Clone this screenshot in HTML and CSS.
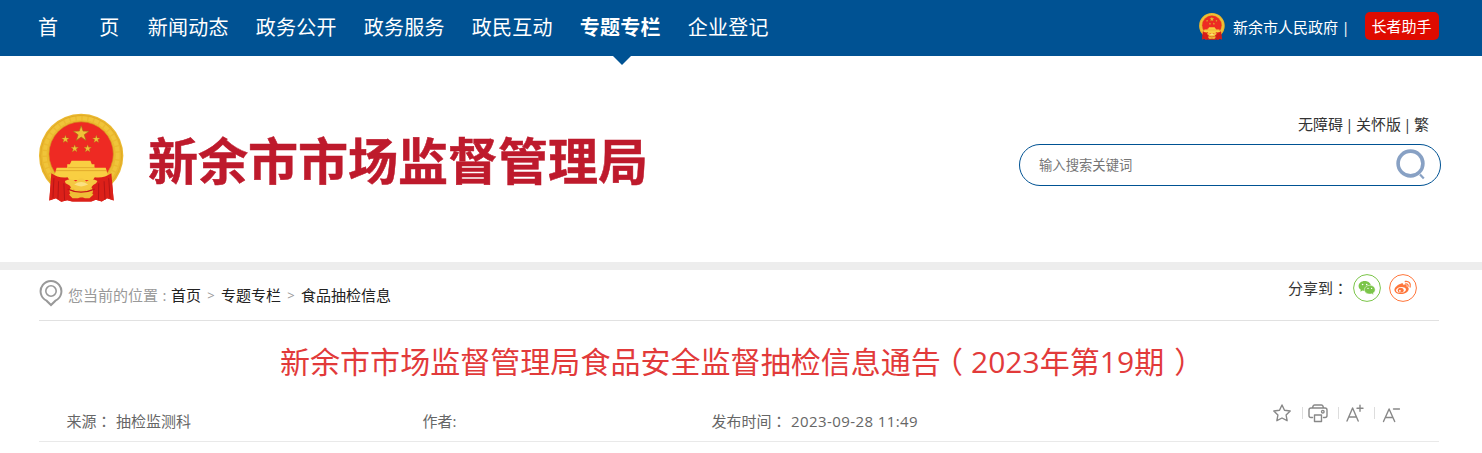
FILE: index.html
```html
<!DOCTYPE html>
<html lang="zh-CN">
<head>
<meta charset="utf-8">
<title>新余市市场监督管理局</title>
<link rel="stylesheet" href="styles.css">
</head>
<body>
<svg class="defs" width="0" height="0">
  <symbol id="star" viewBox="-10 -10 20 20"><path d="M0-10 2.3-3.2 9.5-3.1 3.7 1.2 5.9 8.1 0 4-5.9 8.1-3.7 1.2-9.5-3.1-2.3-3.2z"/></symbol>
  <symbol id="emblem" viewBox="27 26 256 268">
    <path d="M65 205 58 288 78 281 94 292 112 287 128 292H184L198 286 216 291 232 281 252 288 244 205z" fill="#dc2019"/>
    <ellipse cx="154" cy="153" rx="127" ry="126" fill="#ebb92f"/>
    <ellipse cx="154" cy="153" rx="122" ry="121" fill="none" stroke="#dba324" stroke-width="2"/>
    <ellipse cx="154" cy="150" rx="110" ry="110" fill="none" stroke="#f0c43a" stroke-width="12" stroke-dasharray="14 4"/>
    <ellipse cx="154" cy="148" rx="97" ry="97" fill="#ee2a23" stroke="#d59720" stroke-width="2"/>
    <g fill="#f1c238" stroke="#a86f18" stroke-width=".8">
      <use href="#star" x="129" y="62" width="50" height="50"/>
      <use href="#star" x="94" y="91" width="25" height="25"/>
      <use href="#star" x="187" y="91" width="25" height="25"/>
      <use href="#star" x="122" y="119" width="25" height="25"/>
      <use href="#star" x="161" y="119" width="25" height="25"/>
    </g>
    <path d="M125 168H182L186 179H194V189H228L236 218 203 226H105L72 218 80 189H112V179H120z" fill="#f9cf42"/>
    <path d="M115 189H193M78 198H230" stroke="#d79a22" stroke-width="2"/>
    <path d="M64 206Q86 222 113 218L128 240 118 256 126 290 112 287 94 292 78 281 58 288zM245 206Q222 222 195 218L180 240 190 256 184 290 198 286 216 291 232 281 252 288z" fill="#dc2019"/>
    <path d="M72 221 69 280M86 230 84 284M102 236 104 287M237 221 241 280M223 230 226 286M207 236 206 286" stroke="#b51516" stroke-width="3" fill="none"/>
    <path d="M105 229Q124 218 138 231Q154 211 170 231Q185 218 203 229L199 236Q187 241 182 251Q154 263 126 251Q120 240 107 236z" fill="#f5c841"/>
    <path d="M133 240Q154 225 175 240Q154 251 133 240z" fill="#fae183"/>
    <path d="M117 270 132 264Q154 251 176 264L191 270 179 281H165L155 276 145 281H128z" fill="#efbd36"/>
    <path d="M113 254Q153 272 195 254" fill="none" stroke="#c81518" stroke-width="4"/>
  </symbol>
</svg>
<header class="topbar">
  <nav class="nav">
    <a>首　　页</a><a>新闻动态</a><a>政务公开</a><a>政务服务</a><a>政民互动</a><a class="active">专题专栏</a><a>企业登记</a>
  </nav>
  <div class="gov">
    <svg class="gov-emblem"><use href="#emblem"/></svg>
    <span>新余市人民政府</span><i>|</i>
    <a class="elder">长者助手</a>
  </div>
</header>
<section class="banner">
  <svg class="logo"><use href="#emblem"/></svg>
  <h1>新余市市场监督管理局</h1>
  <div class="tools">
    <div class="links"><span>无障碍</span><i>|</i><span>关怀版</span><i>|</i><span>繁</span></div>
    <div class="search">
      <span>输入搜索关键词</span>
      <svg width="32" height="34" viewBox="0 0 32 34" fill="none" stroke="#88a1c4"><circle cx="15.500" cy="15.500" r="12.400" stroke-width="3.600"/><path d="m25 26.500 3.800 4" stroke-width="2.200"/></svg>
    </div>
  </div>
</section>
<main class="page">
  <div class="crumbs">
    <svg class="pin" width="24" height="28" viewBox="0 0 24 28" fill="none" stroke="#999"><path d="M7.500 21.700A10.400 10.400 0 1 1 16.500 21.700L12 26z" stroke-width="2"/><circle cx="12" cy="12" r="5.200" stroke-width="1.600"/></svg>
    <div class="trail">您当前的位置<b class="colon">:</b><a>首页</a><b class="sep">&gt;</b><a>专题专栏</a><b class="sep">&gt;</b><a>食品抽检信息</a></div>
    <div class="share">
      <span>分享到<span class="tc" lang="zh-TW">：</span></span>
      <svg width="28" height="28" viewBox="0 0 28 28"><circle cx="14" cy="14" r="13.400" fill="#fff" stroke="#7bc549"/><path d="M11.700 7C8.200 7 5.600 9.200 5.600 12c0 1.600.8 2.900 2.200 3.800L7.300 17.800l2.300-1.200q1 .3 2.100.3c3.600 0 6.200-2.200 6.200-4.900S15.300 7 11.700 7z" fill="#7bc549"/><path d="M16.800 11.300c-3.100 0-5.400 1.900-5.400 4.400s2.300 4.400 5.400 4.400q1 0 1.800-.3l2.100 1.100-.5-1.800c1.200-.8 2-2 2-3.400 0-2.500-2.300-4.400-5.400-4.400z" fill="#7bc549" stroke="#fff" stroke-width=".5"/><g fill="#fff"><circle cx="9.600" cy="10.500" r=".8"/><circle cx="13.700" cy="10.500" r=".8"/><circle cx="15" cy="14.400" r=".65"/><circle cx="18.600" cy="14.400" r=".65"/></g></svg>
      <svg width="28" height="28" viewBox="0 0 28 28"><circle cx="14" cy="14" r="13.400" fill="#fff" stroke="#ff763b"/><path d="M12.300 9.500c1-.5 2.200-.2 2.100 1.400 2-.8 3.900-.5 3.200 1.600 1.500.4 2.300 1.400 2.100 2.800-.4 2.700-4 4.800-7.700 4.800-3.800 0-6.600-1.700-6.600-4.300 0-2.300 3.500-5.200 6.900-6.300z" fill="#ff763b"/><ellipse cx="12" cy="16" rx="5" ry="3" transform="rotate(-8 12 16)" fill="#fff"/><ellipse cx="11.700" cy="16.200" rx="3" ry="2.500" fill="#ff763b"/><circle cx="10.900" cy="16.800" r=".9" fill="#fff"/><path d="M16.300 7.500c3.500-.7 6 2 4.800 5.500M16.700 9.900c1.800-.3 2.800.9 2.300 2.500" fill="none" stroke="#ff763b" stroke-width="1.300" stroke-linecap="round"/></svg>
    </div>
  </div>
  <h2>新余市市场监督管理局食品安全监督抽检信息通告<span class="open">（</span><span>2023</span>年第<span>19</span>期<span class="close">）</span></h2>
  <div class="meta">
    <div>来源<span class="tc" lang="zh-TW">：</span> 抽检监测科</div>
    <div>作者:</div>
    <div>发布时间<span class="tc" lang="zh-TW">：</span> <span class="date">2023-09-28 11:49</span></div>
    <div class="actions">
      <svg width="20" height="20" viewBox="0 0 20 20"><path d="m10 2 2.500 5.200 5.700.8-4.100 4 1 5.700-5.100-2.700-5.100 2.700 1-5.700-4.100-4 5.700-.8z"/></svg><i></i>
      <svg width="20" height="20" viewBox="0 0 20 20"><path d="M4.500 14.500H3q-2 0-2-2V7q0-2 2-2h14q2 0 2 2v5.500q0 2-2 2h-1.500M4.500 5l.6-2q.3-1 1.400-1h7q1.100 0 1.400 1l.6 2M6.500 12h7v6.500h-7z"/><circle cx="14.800" cy="8.700" r="1.300"/></svg><i></i>
      <svg width="20" height="20" viewBox="0 0 20 20"><path d="m3 18 5.600-13 5.600 13M5 14h7.300M13 5.300h6M16 2.300v6"/></svg><i></i>
      <svg width="20" height="20" viewBox="0 0 20 20"><path d="m3.500 18.500 5.600-12.500 5.600 12.500M5.500 14.500h7.300M13.500 6h6"/></svg>
    </div>
  </div>
</main>
</body>
</html>
```
FILE: styles.css
```css
* { box-sizing: border-box; }
body { margin: 0; background: #fff; color: #333; font: 15px/20px "Open Sans", "Noto Sans CJK SC", sans-serif; }
h1, h2 { margin: 0; }
b, i { font-weight: 400; font-style: normal; }
svg { display: block; flex: none; }
.defs { position: absolute; }
.topbar { height: 56px; padding: 0 43px 0 38px; background: #005293; color: #fff; display: flex; justify-content: space-between; }
.nav { display: flex; gap: 27.2px; font-size: 20px; line-height: 55px; letter-spacing: .2px; }
.nav a { white-space: pre; }
.nav a:first-child { margin-right: 1px; letter-spacing: .4px; }
.active { position: relative; font-weight: 700; }
.active::after { content: ""; position: absolute; left: 33px; top: 56px; border: solid transparent; border-width: 9px 9.5px 0; border-top-color: #005293; }
.gov { display: flex; align-items: center; height: 53px; }
.gov-emblem { width: 26px; height: 27px; margin-right: 8px; }
.gov i { width: 9px; margin-left: 3px; text-align: center; }
.elder { width: 74px; height: 28px; margin-left: 15px; padding-right: 1px; border-radius: 5px; background: #df0b00; text-align: center; line-height: 28px; margin-top: -1px; }
.banner { height: 214px; padding-left: 39px; padding-right: 41px; border-bottom: 8px solid #ededed; display: flex; align-items: flex-start; }
.logo { width: 85px; height: 90px; margin-top: 57px; }
h1 { margin: 70px 0 0 24px; color: #be1a2c; font-size: 50px; line-height: 70px; font-weight: 700; -webkit-text-stroke: .5px #be1a2c; }
.tools { width: 422px; margin: 58px 0 0 auto; }
.links { display: flex; justify-content: flex-end; align-items: center; padding-right: 12px; height: 20px; }
.links i { width: 13px; text-align: center; }
.search { height: 42px; margin-top: 10px; padding: 0 13px 0 19px; border: 1px solid #005293; border-radius: 21px; color: #757575; font-size: 13.333px; display: flex; align-items: center; justify-content: space-between; }
.search svg { margin-top: -1px; }
.page { width: 1400px; margin-left: 39px; }
.crumbs { height: 51px; border-bottom: 1px solid #e1e1e1; display: flex; }
.pin { margin: 9px 5.500px 0 -.5px; }
.trail { color: #999; padding-top: 15px; display: flex; }
.trail a { color: #222; }
.colon { width: 13px; text-align: center; }
.sep { width: 20px; text-align: center; font-size: 13px; }
.share { margin-left: auto; padding: 4px 22px 0 0; display: flex; gap: 8px; line-height: 28px; }
.share > span { margin-right: -3px; }
.tc { font-family: "Noto Sans CJK TC", sans-serif; }
h2 { padding-left: 241px; margin-top: 19px; height: 44px; line-height: 44px; color: #e23a3a; font-size: 30px; font-weight: 400; white-space: nowrap; letter-spacing: .04px; }
.open, .close { font-feature-settings: "halt"; }
.open { margin-left: 7px; margin-right: 8px; }
.close { margin-left: 10px; }
.meta { height: 58px; border-bottom: 1px solid #e9e9e9; display: grid; grid-template-columns: 356px 289px 1fr auto; padding: 27px 39px 0 27.5px; color: #666; line-height: 20px; }
.meta .tc { margin-right: .5px; }
.date { letter-spacing: .42px; }
.actions { display: flex; align-items: center; height: 20px; margin-top: -8px; }
.actions svg { fill: none; stroke: #888; stroke-width: 1.4; stroke-linejoin: round; stroke-linecap: round; }
.actions i { width: 1px; height: 12px; margin: 0 5px 0 10px; background: #ddd; }
```
